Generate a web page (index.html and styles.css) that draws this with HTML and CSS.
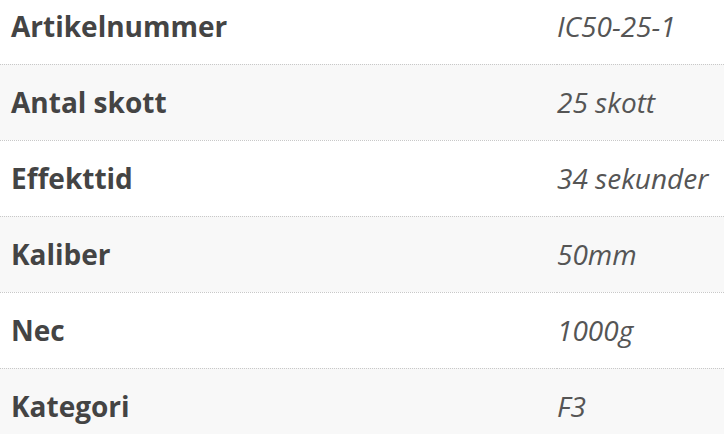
FILE: index.html
```html
<!DOCTYPE html>
<html lang="sv">
<head>
<meta charset="utf-8">
<link rel="stylesheet" href="styles.css">
</head>
<body>
<table class="specs">
  <tbody>
    <tr><th>Artikelnummer</th><td>IC50-25-1</td></tr>
    <tr><th>Antal skott</th><td>25 skott</td></tr>
    <tr><th>Effekttid</th><td>34 sekunder</td></tr>
    <tr><th>Kaliber</th><td>50mm</td></tr>
    <tr><th>Nec</th><td>1000g</td></tr>
    <tr><th>Kategori</th><td>F3</td></tr>
  </tbody>
</table>
</body>
</html>
```

FILE: styles.css
```css
html, body {
  margin: 0;
  padding: 0;
  background: #fff;
}
body {
  font-family: "Open Sans", "Noto Sans", sans-serif;
  overflow: hidden;
}
.specs {
  width: 100%;
  border-collapse: collapse;
  margin-top: -12px;
}
.specs tr {
  height: 76px;
  border-bottom: 1px dotted #c8c8c8;
}
.specs tr:nth-child(even) {
  background: #f8f8f8;
}
.specs th {
  text-align: left;
  font-weight: 700;
  font-size: 28px;
  color: #444;
  padding: 0 11px;
  width: 535px;
  vertical-align: middle;
}
.specs td {
  font-style: italic;
  font-size: 28px;
  color: #555;
  padding: 0;
  vertical-align: middle;
}
```
